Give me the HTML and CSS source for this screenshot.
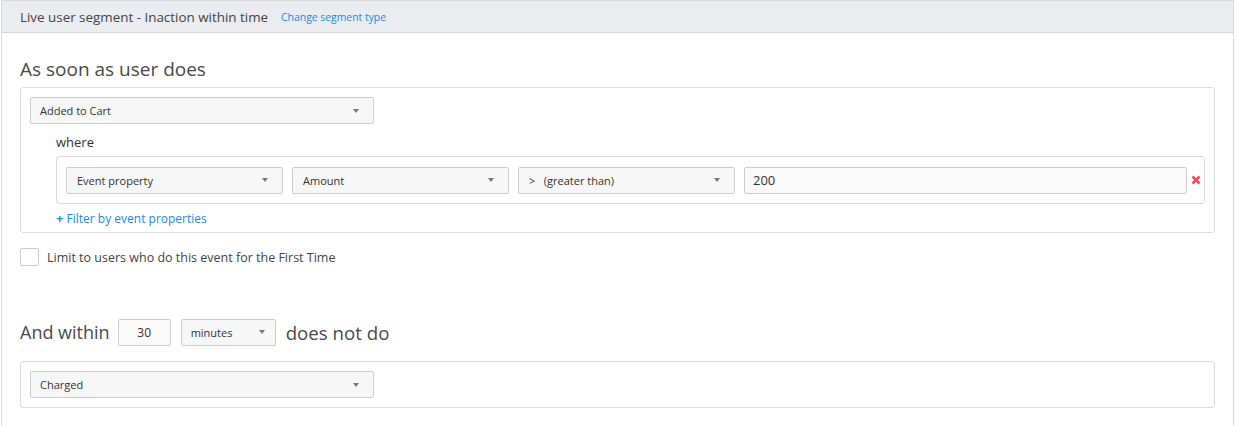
FILE: index.html
```html
<!DOCTYPE html>
<html>
<head>
<meta charset="utf-8">
<link rel="stylesheet" href="styles.css">
</head>
<body>
<div class="panel">
  <div class="panel-head">
    <span class="title">Live user segment - Inaction within time</span>
    <a class="link-small">Change segment type</a>
  </div>
  <div class="panel-body">
    <h2 class="heading first">As soon as user does</h2>
    <div class="box">
      <div class="select wide"><span>Added to Cart</span><i class="caret"></i></div>
      <div class="where-wrap">
        <div class="where">where</div>
        <div class="filter-box">
          <div class="select prop"><span>Event property</span><i class="caret"></i></div>
          <div class="select prop"><span>Amount</span><i class="caret"></i></div>
          <div class="select prop"><span>&gt;&nbsp;&nbsp;&nbsp;(greater than)</span><i class="caret"></i></div>
          <div class="input value">200</div>
          <svg class="remove" width="10" height="10" viewBox="0 0 10 10"><path d="M1.5 1.5 L8.5 8.5 M8.5 1.5 L1.5 8.5" stroke="#f0475a" stroke-width="2.6" stroke-linecap="butt"/></svg>
        </div>
        <a class="add-filter"><span class="plus">+</span> Filter by event properties</a>
      </div>
    </div>
    <label class="check-row"><span class="checkbox"></span><span>Limit to users who do this event for the First Time</span></label>
    <div class="heading second">
      <span>And within</span>
      <div class="input num">30</div>
      <div class="select unit"><span>minutes</span><i class="caret"></i></div>
      <span class="dnd">does not do</span>
    </div>
    <div class="box box2">
      <div class="select wide"><span>Charged</span><i class="caret"></i></div>
    </div>
  </div>
</div>
</body>
</html>
```

FILE: styles.css
```css
* { box-sizing: border-box; }
html, body { margin: 0; padding: 0; background: #fff; }
body {
  font-family: "Open Sans", "Lato", sans-serif;
  color: #444;
  width: 1237px;
  height: 426px;
  overflow: hidden;
}
.panel {
  margin-left: 1px;
  width: 1233px;
  border-left: 1px solid #d9dadd;
  border-right: 1px solid #d9dadd;
  border-top: 1px solid #d9dadd;
  height: 440px;
}
.panel-head {
  height: 32px;
  background: #ebecf0;
  border-bottom: 1px solid #d6d7da;
  display: flex;
  align-items: center;
  padding-left: 18px;
  gap: 13px;
}
.title { font-size: 13.4px; color: #444; }
.link-small { font-size: 10.4px; color: #1a8be2; }
.panel-body { padding: 0 18px; }
.heading {
  font-size: 19px;
  color: #4a4a4a;
  font-weight: 400;
  margin: 0;
}
.heading.first { padding-top: 24px; line-height: 24px; height: 54px; padding-bottom: 5px; }
.box {
  border: 1px solid #dcdcdc;
  border-radius: 3px;
  padding: 9px 9px 9px 9px;
  width: 1195px;
}
.select {
  height: 27px;
  border: 1px solid #cdcdcd;
  border-radius: 2px;
  background: #f7f7f7;
  display: flex;
  align-items: center;
  justify-content: space-between;
  padding: 0 14px 0 9px;
  font-size: 11px;
  color: #333;
}
.caret {
  width: 0; height: 0;
  border-left: 3.5px solid transparent;
  border-right: 3.5px solid transparent;
  border-top: 4px solid #777;
}
.wide { width: 344px; }
.where-wrap { padding-left: 26px; }
.where { font-size: 13px; color: #333; padding-top: 10px; line-height: 16px; height: 32px; }
.filter-box {
  border: 1px solid #dcdcdc;
  border-radius: 3px;
  width: 1149px;
  height: 48px;
  display: flex;
  align-items: center;
  padding-left: 9px;
  gap: 9px;
}
.prop { width: 217px; padding-left: 10px; }
.input {
  height: 27px;
  border: 1px solid #cdcdcd;
  border-radius: 2px;
  background: #fafafa;
  display: flex;
  align-items: center;
  font-size: 12px;
  color: #333;
}
.value { width: 443px; padding-left: 8px; font-size: 13px; margin-left: 0; }
.remove { margin-left: -5px; }
.add-filter {
  display: block;
  color: #1a8be2;
  font-size: 12px;
  padding-top: 7px;
  line-height: 14px;
  height: 19px;
}
.plus { font-weight: 700; font-size: 13px; }
.check-row {
  display: flex;
  align-items: center;
  gap: 8px;
  margin-top: 15px;
  height: 18px;
  font-size: 12.5px;
  color: #444;
}
.checkbox {
  width: 19px; height: 18px;
  border: 1px solid #cdcdcd;
  border-radius: 2px;
  background: #fff;
}
.heading.second {
  display: flex;
  align-items: center;
  gap: 10px;
  margin-top: 52px;
  height: 28px;
  font-size: 18px;
}
.dnd { font-size: 18.7px; }
.num { width: 53px; justify-content: center; font-size: 12px; margin-left: -2px; }
.unit { width: 95px; padding-left: 9px; padding-right: 10px; }
.box2 { margin-top: 15px; }
```
